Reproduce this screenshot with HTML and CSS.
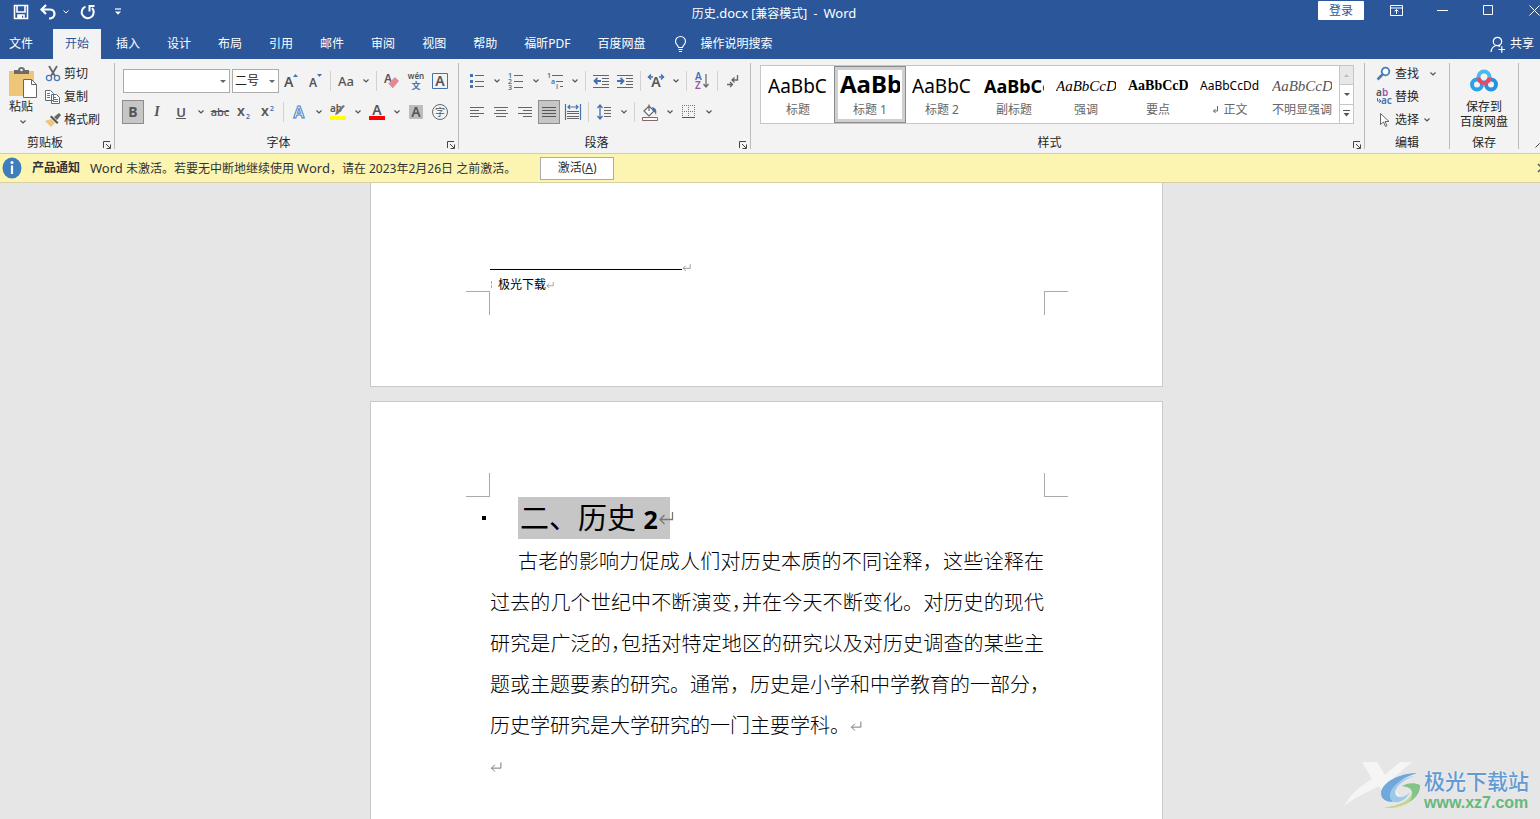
FILE: index.html
```html
<!DOCTYPE html>
<html lang="zh-CN">
<head>
<meta charset="utf-8">
<title>历史.docx - Word</title>
<link rel="stylesheet" href="styles.css">
</head>
<body>
<svg class="defs" aria-hidden="true">
  <symbol id="chev" viewBox="0 0 6 4"><path d="M.5.5 3 3 5.500.5" fill="none" stroke="#555" stroke-width="1.200"/></symbol>
  <symbol id="launch" viewBox="0 0 8 8"><path d="M.5 7V.5H7M3 3l4 4M7.500 3.500v4h-4" fill="none" stroke="#444"/></symbol>
  <symbol id="ret" viewBox="0 0 16 14"><path d="M14.500 1v7.500H2M6.500 4 2 8.500 6.500 13" fill="none" stroke="#777" stroke-width="1.300"/></symbol>
</svg>

<header class="titlebar">
  <div class="quick">
    <button aria-label="保存"><svg width="16" height="16" viewBox="0 0 16 16"><path d="M1.500 1.500h13v13h-13zM4 1.500V8h8V1.500M5 14.500V11h6v3.500" fill="none" stroke="#fff" stroke-width="1.600"/><path d="M5 11h4v4H5z" fill="#fff"/></svg></button>
    <button aria-label="撤消" class="undo"><svg width="16" height="16" viewBox="0 0 16 16"><path d="M6 1 1.500 5.500 6 10M2 5.500h7.500c3 0 5 1.800 5 4.500s-2.500 4.500-5.500 4.500" fill="none" stroke="#fff" stroke-width="2.200"/></svg><svg width="6" height="4" viewBox="0 0 6 4"><path d="M.5.5 3 3 5.500.5" fill="none" stroke="#fff"/></svg></button>
    <button aria-label="重复"><svg width="16" height="16" viewBox="0 0 16 16"><path d="M5.500 2.600A6 6 0 1 0 12 4M9.500 7.500V2h5" fill="none" stroke="#fff" stroke-width="2"/></svg></button>
    <button aria-label="自定义快速访问工具栏" class="custom"><svg width="6" height="8" viewBox="0 0 6 8"><path d="M0 1h6" stroke="#fff" stroke-width="1.200"/><path d="M0 3.500h6L3 6.800z" fill="#fff"/></svg></button>
  </div>
  <h1 class="doc-title">历史<span class="lat">.docx</span> [兼容模式]&nbsp; -&nbsp; <span class="lat">Word</span></h1>
  <div class="window-tools">
    <button class="login">登录</button>
    <button aria-label="功能区显示选项" class="wbtn"><svg width="13" height="11" viewBox="0 0 13 11"><path d="M.5.5h12v10H.5zM.5 3h12M6.500 9V4.500M4.500 6.500l2-2 2 2" fill="none" stroke="#fff"/></svg></button>
    <button aria-label="最小化" class="wbtn"><svg width="11" height="11" viewBox="0 0 11 11"><path d="M0 5.500h11" stroke="#fff"/></svg></button>
    <button aria-label="最大化" class="wbtn"><svg width="11" height="11" viewBox="0 0 11 11"><path d="M.5.5h9v9h-9z" fill="none" stroke="#fff"/></svg></button>
    <button aria-label="关闭" class="wbtn"><svg width="11" height="11" viewBox="0 0 11 11"><path d="m.5.5 10 10m0-10-10 10" stroke="#fff"/></svg></button>
  </div>
</header>

<nav class="tabs">
  <button class="file">文件</button><button class="active">开始</button><button>插入</button><button>设计</button><button>布局</button><button>引用</button><button>邮件</button><button>审阅</button><button>视图</button><button>帮助</button><button>福昕PDF</button><button>百度网盘</button>
  <button class="tell"><svg width="13" height="17" viewBox="0 0 13 17"><path d="M4.500 11.500c0-2-3-3-3-6a5 5 0 0 1 10 0c0 3-3 4-3 6zM4.500 13.500h4M5 15.500h3" fill="none" stroke="#fff" stroke-width="1.100"/></svg>操作说明搜索</button>
  <button class="share"><svg width="16" height="17" viewBox="0 0 16 17"><circle cx="7.500" cy="5.500" r="4.200" fill="none" stroke="#fff" stroke-width="1.200"/><path d="M1 16c.3-3.500 2-5.500 4.500-6.300M8 9.700c1 .1 1.500.5 2 1M8.500 13.500H15M11.800 10.200v6.500" fill="none" stroke="#fff" stroke-width="1.200"/></svg>共享</button>
</nav>

<main class="ribbon">
  <section class="group clipboard">
    <div class="body">
      <button class="paste">
        <svg width="29" height="31" viewBox="0 0 29 31"><path d="M0 4h25v25H0z" fill="#edc67a"/><path d="M5 7V3h4c0-4 7-4 7 0h4v4z" fill="#6b6b6b"/><circle cx="12.500" cy="3" r="1.300" fill="#f3f3f3"/><path d="M14.500 12.500h8l5 5v13h-13z" fill="#fff" stroke="#666"/><path d="M22.500 12.500v5h5" fill="none" stroke="#666"/></svg>
        <span>粘贴</span><svg width="6" height="4"><use href="#chev"/></svg>
      </button>
      <div class="stack">
        <button><svg width="16" height="16" viewBox="0 0 16 16"><path d="M4 0 10 10M12 0 6 10" stroke="#666" stroke-width="1.800"/><circle cx="4" cy="12" r="2.600" fill="none" stroke="#4a7ab5" stroke-width="1.300"/><circle cx="12" cy="12" r="2.600" fill="none" stroke="#4a7ab5" stroke-width="1.300"/></svg>剪切</button>
        <button><svg width="16" height="16" viewBox="0 0 16 16"><path d="M.5 1.500h5l3 3v7h-8zM6.500 5.500h5l3 3v6h-8z" fill="#fff" stroke="#5a6b80"/><path d="M2 4.500h3M2 6.500h3M2 8.500h3M8 8.500h3M8 10.500h5M8 12.500h5" stroke="#4a7ab5"/></svg>复制</button>
        <button><svg width="16" height="16" viewBox="0 0 16 16"><path d="m0 9 6-2 4 4-4 4z" fill="#edc67a"/><path d="m5 5 7 7 1.500-1.500-7-7z" fill="#555"/><path d="m9 5 5-4 2 2-4 5z" fill="#666"/></svg>格式刷</button>
      </div>
    </div>
    <footer>剪贴板<button class="launcher" aria-label="剪贴板设置"><svg width="8" height="8"><use href="#launch"/></svg></button></footer>
  </section>

  <section class="group font">
    <div class="body rows">
      <div class="row">
        <label class="combo name"><select aria-label="字体"><option></option></select></label>
        <label class="combo size"><select aria-label="字号"><option>二号</option></select></label>
        <button class="t" aria-label="增大字号"><svg width="18" height="18" viewBox="0 0 18 18"><text x="2" y="15" class="g14">A</text><path d="M11 5h5l-2.500-3z" fill="#4472b0"/></svg></button>
        <button class="t" aria-label="减小字号"><svg width="18" height="18" viewBox="0 0 18 18"><text x="3" y="15" class="g12">A</text><path d="M11 2h5l-2.500 3z" fill="#4472b0"/></svg></button>
        <i class="sep"></i>
        <button class="t aa">Aa</button><button class="c" aria-label="更改大小写"><svg width="6" height="4"><use href="#chev"/></svg></button>
        <i class="sep"></i>
        <button class="t" aria-label="清除格式"><svg width="18" height="18" viewBox="0 0 18 18"><text x="1" y="11" class="g12">A</text><path d="m5 12 7-7 4 4-6 7H8z" fill="#e58a95"/><path d="m5 12 4 4" stroke="#fff"/></svg></button>
        <button class="t" aria-label="拼音指南"><svg width="18" height="18" viewBox="0 0 18 18"><text x="9" y="7" text-anchor="middle" class="g8">wén</text><text x="9" y="17" text-anchor="middle" class="b9">文</text></svg></button>
        <button class="t" aria-label="字符边框"><svg width="16" height="16" viewBox="0 0 16 16"><path d="M.5.5h15v15H.5z" fill="none" stroke="#4472b0"/><text x="8" y="13" text-anchor="middle" class="g14">A</text></svg></button>
      </div>
      <div class="row">
        <button class="t on"><b>B</b></button><button class="t ital">I</button><button class="t under">U</button><button class="c" aria-label="下划线样式"><svg width="6" height="4"><use href="#chev"/></svg></button>
        <button class="t strike">abc</button>
        <button class="t" aria-label="下标"><svg width="16" height="16" viewBox="0 0 16 16"><text x="1" y="12" class="g14">x</text><text x="10" y="15" class="b7">2</text></svg></button>
        <button class="t" aria-label="上标"><svg width="16" height="16" viewBox="0 0 16 16"><text x="1" y="12" class="g14">x</text><text x="10" y="7" class="b7">2</text></svg></button>
        <i class="sep"></i>
        <button class="t" aria-label="文本效果"><svg width="16" height="16" viewBox="0 0 16 16"><text x="8" y="14" text-anchor="middle" class="fx">A</text></svg></button><button class="c" aria-label="效果选项"><svg width="6" height="4"><use href="#chev"/></svg></button>
        <button class="t" aria-label="突出显示"><svg width="18" height="18" viewBox="0 0 18 18"><text x="1" y="9" class="g10">ab</text><path d="m16 3-7 8-3 1 1-3 7-7z" fill="#777"/><path d="M1 13h16v4H1z" fill="#ff0"/></svg></button><button class="c" aria-label="突出显示颜色"><svg width="6" height="4"><use href="#chev"/></svg></button>
        <button class="t" aria-label="字体颜色"><svg width="18" height="18" viewBox="0 0 18 18"><text x="9" y="12" text-anchor="middle" class="g14">A</text><path d="M1 13h16v4H1z" fill="#f00"/></svg></button><button class="c" aria-label="更多字体颜色"><svg width="6" height="4"><use href="#chev"/></svg></button>
        <button class="t" aria-label="字符底纹"><svg width="14" height="14" viewBox="0 0 14 14"><path d="M0 0h14v14H0z" fill="#bdbdbd"/><text x="7" y="12" text-anchor="middle" class="g14">A</text></svg></button>
        <button class="t" aria-label="带圈字符"><svg width="16" height="16" viewBox="0 0 16 16"><circle cx="8" cy="8" r="7.500" fill="none" stroke="#666"/><text x="8" y="12" text-anchor="middle" class="g9">字</text></svg></button>
      </div>
    </div>
    <footer>字体<button class="launcher" aria-label="字体设置"><svg width="8" height="8"><use href="#launch"/></svg></button></footer>
  </section>

  <section class="group para">
    <div class="body rows">
      <div class="row">
        <button class="t" aria-label="项目符号"><svg width="16" height="16" viewBox="0 0 16 16"><path d="M1 1h3v3H1zM1 7h3v3H1zM1 12h3v3H1z" fill="#4472b0"/><path d="M6 2.500h9M6 8.500h9M6 13.500h9" stroke="#666"/></svg></button><button class="c" aria-label="项目符号库"><svg width="6" height="4"><use href="#chev"/></svg></button>
        <button class="t" aria-label="编号"><svg width="16" height="18" viewBox="0 0 16 18"><text x="0" y="6" class="b7">1</text><text x="0" y="12" class="b7">2</text><text x="0" y="18" class="b7">3</text><path d="M6 3.500h9M6 9.500h9M6 15.500h9" stroke="#666"/></svg></button><button class="c" aria-label="编号库"><svg width="6" height="4"><use href="#chev"/></svg></button>
        <button class="t" aria-label="多级列表"><svg width="18" height="18" viewBox="0 0 18 18"><text x="1" y="6" class="b7">1</text><text x="5" y="12" class="b7">a</text><text x="10" y="17" class="b7">i</text><path d="M6 3.500h11M10 9.500h7M14 14.500h3" stroke="#666"/></svg></button><button class="c" aria-label="列表库"><svg width="6" height="4"><use href="#chev"/></svg></button>
        <i class="sep"></i>
        <button class="t" aria-label="减少缩进量"><svg width="16" height="14" viewBox="0 0 16 14"><path d="M0 1.500h16M9 4.500h7M9 7.500h7M9 10.500h7M0 13.500h16" stroke="#666"/><path d="M8 7H2M4.500 4 1.500 7l3 3" fill="none" stroke="#4472b0" stroke-width="1.800"/></svg></button>
        <button class="t" aria-label="增加缩进量"><svg width="16" height="14" viewBox="0 0 16 14"><path d="M0 1.500h16M9 4.500h7M9 7.500h7M9 10.500h7M0 13.500h16" stroke="#666"/><path d="M0 7h6M3.500 4l3 3-3 3" fill="none" stroke="#4472b0" stroke-width="1.800"/></svg></button>
        <i class="sep"></i>
        <button class="t" aria-label="中文版式"><svg width="18" height="16" viewBox="0 0 18 16"><text x="9" y="14" text-anchor="middle" class="g14">A</text><path d="M6 4H2M4 1.500 1.500 4 4 6.500M12 4h4M14 1.500 16.500 4 14 6.500" fill="none" stroke="#4472b0" stroke-width="1.500"/></svg></button><button class="c" aria-label="版式选项"><svg width="6" height="4"><use href="#chev"/></svg></button>
        <i class="sep"></i>
        <button class="t" aria-label="排序"><svg width="16" height="18" viewBox="0 0 16 18"><text x="1" y="8" class="b10">A</text><text x="1" y="17" class="z10">Z</text><path d="M12 2v13M9.500 12l2.500 3 2.500-3" fill="none" stroke="#666" stroke-width="1.200"/></svg></button>
        <i class="sep"></i>
        <button class="t" aria-label="显示编辑标记"><svg width="14" height="16" viewBox="0 0 14 16"><path d="M11.500 2v5H6M8.500 4.500 6 7l2.500 2.500M1 11.500h5M4 9l2.500 2.500L4 14" fill="none" stroke="#666" stroke-width="1.300"/></svg></button>
      </div>
      <div class="row">
        <button class="t" aria-label="左对齐"><svg width="14" height="14" viewBox="0 0 14 14"><path d="M0 2.500h14M0 5.500h9M0 8.500h14M0 11.500h9" stroke="#666"/></svg></button>
        <button class="t" aria-label="居中"><svg width="14" height="14" viewBox="0 0 14 14"><path d="M0 2.500h14M2 5.500h10M0 8.500h14M2 11.500h10" stroke="#666"/></svg></button>
        <button class="t" aria-label="右对齐"><svg width="14" height="14" viewBox="0 0 14 14"><path d="M0 2.500h14M5 5.500h9M0 8.500h14M5 11.500h9" stroke="#666"/></svg></button>
        <button class="t on" aria-label="两端对齐"><svg width="14" height="14" viewBox="0 0 14 14"><path d="M0 2.500h14M0 5.500h14M0 8.500h14M0 11.500h14" stroke="#555"/></svg></button>
        <button class="t" aria-label="分散对齐"><svg width="16" height="16" viewBox="0 0 16 16"><path d="M.5 0v16M15.500 0v16M3 3h10M5 1 3 3l2 2M11 1l2 2-2 2" fill="none" stroke="#4472b0" stroke-width="1.200"/><path d="M2 7.500h12M2 9.500h12M2 12.500h12M2 14.500h12" stroke="#666"/></svg></button>
        <i class="sep"></i>
        <button class="t" aria-label="行距"><svg width="16" height="16" viewBox="0 0 16 16"><path d="M4 1v14M1.500 4 4 1l2.500 3M1.500 12 4 15l2.500-3" fill="none" stroke="#4472b0" stroke-width="1.300"/><path d="M8 3.500h7M8 6.500h7M8 9.500h7M8 12.500h7" stroke="#666"/></svg></button><button class="c" aria-label="行距选项"><svg width="6" height="4"><use href="#chev"/></svg></button>
        <i class="sep"></i>
        <button class="t" aria-label="底纹"><svg width="18" height="18" viewBox="0 0 18 18"><path d="m3 8 5-5 5 5-5 5zM8 8V1.500" fill="#fff" stroke="#666" stroke-width="1.200"/><path d="M11 4c4 1 5 3 4 8-1-2-1-3-3-4z" fill="#4472b0"/><path d="M1.500 14.500h15v3h-15z" fill="#fff" stroke="#866"/></svg></button><button class="c" aria-label="底纹颜色"><svg width="6" height="4"><use href="#chev"/></svg></button>
        <button class="t" aria-label="边框"><svg width="14" height="14" viewBox="0 0 14 14"><path d="M.5 0v13M6.500 0v13M12.500 0v13M0 .5h13M0 6.500h13" fill="none" stroke="#777" stroke-dasharray="1 1"/><path d="M0 12.500h13" stroke="#555"/></svg></button><button class="c" aria-label="边框选项"><svg width="6" height="4"><use href="#chev"/></svg></button>
      </div>
    </div>
    <footer>段落<button class="launcher" aria-label="段落设置"><svg width="8" height="8"><use href="#launch"/></svg></button></footer>
  </section>

  <section class="group styles">
    <div class="body">
      <div class="gallery">
        <button class="style"><span class="pv light">AaBbC</span><span class="nm">标题</span></button>
        <button class="style sel"><span class="pv h1">AaBb</span><span class="nm">标题 1</span></button>
        <button class="style"><span class="pv light">AaBbC</span><span class="nm">标题 2</span></button>
        <button class="style"><span class="pv sub">AaBbCc</span><span class="nm">副标题</span></button>
        <button class="style"><span class="pv em">AaBbCcDd</span><span class="nm">强调</span></button>
        <button class="style"><span class="pv strong">AaBbCcD</span><span class="nm">要点</span></button>
        <button class="style"><span class="pv normal">AaBbCcDd</span><span class="nm"><svg width="7" height="8" viewBox="0 0 7 8"><path d="M5.500 0v5H1.500M3.500 3l-2 2 2 2" fill="none" stroke="#666"/></svg> 正文</span></button>
        <button class="style"><span class="pv em faint">AaBbCcDd</span><span class="nm">不明显强调</span></button>
        <div class="scroller">
          <button class="off" aria-label="上一行"><svg width="5" height="3" viewBox="0 0 5 3"><path d="M0 3h5L2.500 0z" fill="#bbb"/></svg></button>
          <button aria-label="下一行"><svg width="6" height="3" viewBox="0 0 6 3"><path d="M0 0h6L3 3z" fill="#555"/></svg></button>
          <button aria-label="更多样式"><svg width="7" height="7" viewBox="0 0 7 7"><path d="M0 .5h7" stroke="#555"/><path d="M.5 3h6l-3 3.500z" fill="#555"/></svg></button>
        </div>
      </div>
    </div>
    <footer>样式<button class="launcher" aria-label="样式设置"><svg width="8" height="8"><use href="#launch"/></svg></button></footer>
  </section>

  <section class="group edit">
    <div class="body stack">
      <button><svg width="16" height="16" viewBox="0 0 16 16"><circle cx="9.500" cy="5.500" r="3.800" fill="#fff" stroke="#4a7ab5" stroke-width="1.800"/><path d="m6.500 8.500-5 5" stroke="#4a7ab5" stroke-width="2.500"/></svg>查找<svg class="far" width="6" height="4"><use href="#chev"/></svg></button>
      <button><svg width="16" height="18" viewBox="0 0 16 18"><text x="0" y="8" class="g10">a</text><text x="6" y="8" class="z10">b</text><text x="5" y="16" class="b10">ac</text><path d="M1.500 10v3h3M3 11l2 2-2 2" fill="none" stroke="#4472b0"/></svg>替换</button>
      <button><svg width="16" height="16" viewBox="0 0 16 16"><path d="M4.500 1.500v11l3-2.500 2 4.500 1.500-.8-2-4.200h4z" fill="#fff" stroke="#666"/></svg>选择<svg class="near" width="6" height="4"><use href="#chev"/></svg></button>
    </div>
    <footer>编辑</footer>
  </section>

  <section class="group save">
    <div class="body">
      <button class="cloud"><svg width="28" height="24" viewBox="0 0 28 24"><circle cx="7" cy="15.500" r="5" fill="none" stroke="#2ba3e8" stroke-width="4"/><circle cx="21" cy="15.500" r="5" fill="none" stroke="#2493e3" stroke-width="4"/><circle cx="14" cy="8" r="5.500" fill="none" stroke="#49b9f0" stroke-width="4"/><path d="M8.500 8.500a5.500 5.500 0 0 0 11 0" fill="none" stroke="#ef4760" stroke-width="4"/></svg><span>保存到<br>百度网盘</span></button>
    </div>
    <footer>保存</footer>
  </section>
  <div class="ribbon-end"><button class="collapse" aria-label="折叠功能区"><svg width="9" height="6" viewBox="0 0 9 6"><path d="m.5 5.500 4-4 4 4" fill="none" stroke="#444"/></svg></button></div>
</main>

<aside class="notice">
  <svg width="20" height="22" viewBox="0 0 20 22"><ellipse cx="10" cy="11" rx="9.500" ry="10.500" fill="#3f7dbd"/><circle cx="10" cy="5.500" r="1.500" fill="#fff"/><path d="M10 8.500V17" stroke="#fff" stroke-width="2.200"/></svg>
  <strong>产品通知</strong>
  <span><span class="lat">Word</span> 未激活。若要无中断地继续使用 <span class="lat">Word</span>，请在 2023年2月26日 之前激活。</span>
  <button class="activate">激活(<u>A</u>)</button>
  <button class="dismiss" aria-label="关闭通知"><svg width="8" height="8" viewBox="0 0 8 8"><path d="m0 0 8 8m0-8L0 8" stroke="#555" stroke-width="1.500"/></svg></button>
</aside>

<div class="canvas">
  <article class="page first">
    <div class="note-rule"><hr><svg width="9" height="9"><use href="#ret"/></svg></div>
    <p class="footnote"><svg width="3" height="8" viewBox="0 0 3 8"><path d="M1.500 0v3M1.500 4v3" stroke="#aaa"/></svg>极光下载<svg width="8" height="8"><use href="#ret"/></svg></p>
    <div class="corners down"><i></i><i></i></div>
  </article>
  <article class="page second">
    <div class="corners up"><i></i><i></i></div>
    <h2><span class="dot"></span><mark>二、历史 <b>2</b></mark><svg width="16" height="16"><use href="#ret"/></svg></h2>
    <div class="text">
      <p class="indent">古老的影响力促成人们对历史本质的不同诠释，这些诠释在</p>
      <p>过去的几个世纪中不断演变<span class="half">，</span>并在今天不断变化。对历史的现代</p>
      <p>研究是广泛的<span class="half">，</span>包括对特定地区的研究以及对历史调查的某些主</p>
      <p class="start">题或主题要素的研究。通常，历史是小学和中学教育的一部分，</p>
      <p class="start">历史学研究是大学研究的一门主要学科。<svg width="12" height="12"><use href="#ret"/></svg></p>
      <p class="start"><svg width="12" height="12"><use href="#ret"/></svg></p>
    </div>
  </article>
  <div class="watermark">
    <svg class="ghost" width="80" height="50" viewBox="0 0 80 50"><path d="M20 3h15l8 13L58 3h12L48 22l10 16H44l-7-11C24 34 12 39 2 47c6-11 16-20 28-27z" fill="#fff" opacity=".6"/></svg>
    <svg class="logo" width="42" height="38" viewBox="0 0 42 38"><path d="M37 1C20 1 2 10 1 21c0 6 5 9 12 9C8 22 14 8 37 1z" fill="#5b9bd8" opacity=".85"/><path d="M34 4C20 9 13 17 16 23c3 4 10 2 14-3-4 9-14 13-19 8C7 20 15 8 34 4z" fill="#9cc8ea"/><path d="M22 14c5-3 12-4 18-1 1 12-13 23-36 23 15-2 26-7 28-15 0-5-5-6-10-7z" fill="#72bd77" opacity=".85"/><path d="M6 35c13 0 22-6 26-13 1 9-11 16-26 13z" fill="#d6dc8b" opacity=".8"/></svg>
    <div class="wm-text"><span>极光下载站</span><em>www.xz7.com</em></div>
  </div>
</div>
</body>
</html>
```
FILE: styles.css
```css
* { box-sizing: border-box; }
body { margin: 0; height: 100vh; overflow: hidden; display: flex; flex-direction: column; font: 12px/16px "Noto Sans", "Noto Sans CJK SC", sans-serif; color: #262626; background: #e6e6e6; }
button { font: inherit; color: inherit; background: none; border: 0; padding: 0; margin: 0; display: flex; align-items: center; justify-content: center; white-space: nowrap; flex: none; }
svg { flex: none; display: block; overflow: visible; }
p, h1, h2 { margin: 0; }
.defs { position: absolute; width: 0; height: 0; }
.lat { font-size: 13px; }

.titlebar { height: 29px; background: #2b579a; color: #fff; display: grid; grid-template-columns: 1fr auto 1fr; align-items: start; flex: none; }
.quick { display: flex; align-items: center; gap: 11px; padding: 4px 0 0 13px; }
.quick .undo { gap: 7px; }
.quick .custom { margin-left: 8px; }
.doc-title { font-size: 12px; font-weight: 400; line-height: 26px; margin-left: 8px; }
.window-tools { display: flex; align-items: flex-start; justify-content: flex-end; }
.login { background: #fff; color: #2b579a; width: 46px; height: 19px; margin: 1px 9px 0 0; border-radius: 1px; }
.wbtn { width: 46px; height: 20px; }
.window-tools .wbtn:last-child { margin-right: -17px; }
.titlebar, .tabs, .ribbon, .notice { overflow: hidden; }

.tabs { height: 30px; background: #2b579a; color: #fff; display: flex; gap: 3px; flex: none; }
.tabs button { padding: 0 12px; }
.tabs .file { padding: 0 17px 0 9px; }
.tabs .active { background: #f3f3f3; color: #2b579a; }
.tabs .tell { gap: 13px; padding-left: 14px; }
.tabs .share { margin-left: auto; padding: 0 6px; gap: 4px; }

.ribbon { height: 94px; background: #f3f3f3; display: flex; flex: none; padding-top: 4px; }
.group { display: flex; flex-direction: column; position: relative; flex: none; border-right: 1px solid #bbb; height: 86px; }
.group .body { height: 70px; }
.group footer { height: 16px; line-height: 16px; padding-top: 2px; text-align: center; position: relative; padding-right: 24px; }
.launcher { position: absolute; right: 3px; top: 8px; }
.clipboard { width: 115px; }
.clipboard .body { display: flex; gap: 7px; padding-left: 9px; }
.font { width: 344px; }
.para { width: 292px; }
.font footer, .para footer, .styles footer { padding-right: 16px; }
.styles { flex: 1 1 auto; min-width: 0; }
.edit { width: 85px; }
.save { width: 69px; }
.edit footer, .save footer { padding-right: 0; }
.ribbon-end { width: 21px; flex: none; overflow: hidden; }
.collapse { margin: 78px -4px 0 auto; height: 8px; }

.paste { flex-direction: column; justify-content: flex-start; align-items: flex-start; padding-top: 4px; }
.paste span { line-height: 18px; }
.paste > svg:last-child { margin: 4px 0 0 11px; }
.stack { display: flex; flex-direction: column; align-items: flex-start; }
.stack button { height: 23px; gap: 3px; padding-bottom: 2px; }
.edit .stack { padding-left: 11px; }
.edit .far { margin-left: 8px; }
.edit .near { margin-left: 2px; }

.rows { display: flex; flex-direction: column; gap: 7px; padding: 6px 0 0 6px; }
.row { display: flex; align-items: center; height: 24px; }
.combo { position: relative; height: 24px; margin-right: 2px; }
.combo select { appearance: none; width: 100%; height: 100%; border: 1px solid #ababab; border-radius: 0; background: #fff; font: inherit; color: #262626; padding: 0 0 0 2px; display: block; }
.combo::after { content: ""; position: absolute; right: 4px; top: 11px; border: 3px solid transparent; border-top-color: #666; }
.combo.name { width: 107px; margin-left: 2px; }
.combo.size { width: 47px; margin-right: 0; }
.t { width: 24px; height: 24px; color: #555; }
.c { width: 15px; height: 24px; }
.on { background: #c6c6c6; box-shadow: inset 0 0 0 1px #8c8c8c; width: 22px; margin: 0 1px; font-size: 14px; }
.ital { font: italic bold 14px "Liberation Serif", serif; }
.under { text-decoration: underline; font-weight: 600; font-size: 13px; }
.strike { text-decoration: line-through; font-size: 11px; font-weight: 500; }
.aa { font-size: 13px; font-weight: 500; }
.sep { width: 7px; height: 20px; flex: none; background: linear-gradient(#d2d2d2, #d2d2d2) 3px 0 / 1px 100% no-repeat; }
text { font-family: "Noto Sans", "Noto Sans CJK SC", sans-serif; fill: #555; }
.g14 { font-size: 14px; font-weight: 600; }
.g12 { font-size: 12px; font-weight: 600; }
.g10 { font-size: 10px; font-weight: 600; }
.g9 { font-size: 10px; }
.g8 { font-size: 8px; font-weight: 600; }
.b7, .b9, .b10 { fill: #4472b0; font-size: 7px; font-weight: 600; }
.b9 { font-size: 9px; }
.b10, .z10 { font-size: 10px; }
.z10 { fill: #9559a8; font-weight: 600; }
.fx { font-size: 16px; font-weight: 600; fill: #fff; stroke: #4a7fc0; }

.styles .body { padding: 2px 10px 0 9px; }
.gallery { display: flex; border: 1px solid #c6c6c6; background: #fff; height: 59px; padding-left: 1px; }
.style { width: 72px; height: 57px; flex-direction: column; justify-content: flex-start; }
.sel { box-shadow: inset 0 0 0 1px #8c8c8c, inset 0 0 0 4px #cfcfcf; }
.pv { width: 60px; height: 30px; margin-top: 4px; line-height: 32px; overflow: hidden; text-align: left; color: #000; }
.nm { color: #666; display: flex; align-items: center; line-height: 20px; gap: 4px; }
.light { font-size: 19px; }
.h1 { font-size: 24px; font-weight: 700; line-height: 28px; }
.sub { font-size: 18px; font-weight: 700; }
.em { font: italic 15px/32px "Liberation Serif", serif; }
.strong { font: bold 14px/32px "Liberation Serif", serif; }
.normal { font-size: 12px; line-height: 32px; }
.faint { color: #555; }
.scroller { margin-left: auto; width: 14px; display: flex; flex-direction: column; border-left: 1px solid #c6c6c6; }
.scroller button { flex: 1; }
.scroller button + button { border-top: 1px solid #c6c6c6; }
.scroller .off { background: #e8e8e8; }
.cloud { flex-direction: column; width: 100%; padding-top: 6px; line-height: 15px; gap: 6px; }

.notice { height: 30px; flex: none; display: flex; align-items: center; background: #fcf5b2; border-top: 1px solid #d6cf9a; border-bottom: 1px solid #d6d1a4; padding-left: 2px; color: #333; }
.notice strong { margin: 0 10px; }
.activate { width: 74px; height: 23px; border: 1px solid #ababab; background: #fff; margin-left: 24px; }
.dismiss { margin: 0 -6px 0 auto; }

.canvas { flex: 1; min-height: 0; overflow: hidden; position: relative; padding-right: 7px; display: flex; flex-direction: column; align-items: center; gap: 14px; }
.page { background: #fff; border: 1px solid #c9c9c9; width: 793px; color: #000; flex: none; }
.first { border-top: 0; padding: 80px 0 71px; }
.second { padding: 71px 0 200px; }
.note-rule { display: flex; padding-left: 119px; height: 16px; }
.note-rule hr { width: 192px; height: 1px; border: 0; background: #000; margin: 6px 0 0; }
.footnote { display: flex; align-items: center; padding-left: 119px; line-height: 12px; height: 12px; }
.footnote svg:first-child { margin-right: 5px; }
.corners { display: flex; justify-content: space-between; padding: 0 94px 0 95px; }
.corners i { width: 24px; height: 24px; border: 0 solid #aaa; }
.down i { border-top-width: 1px; }
.up i { border-bottom-width: 1px; }
.corners i:first-child { border-right-width: 1px; }
.corners i:last-child { border-left-width: 1px; }
h2 { display: flex; align-items: center; font-size: 29px; line-height: 42px; font-weight: 400; padding-left: 111px; }
.dot { width: 4px; height: 4px; background: #000; margin-right: 32px; }
mark { background: #c6c6c6; color: #000; padding: 0 12px 0 2px; height: 42px; }
mark b { font-size: 25px; font-family: "Open Sans", sans-serif; }
h2 svg { margin-left: -12px; }
.text { padding: 1px 118px 0 119px; font-size: 20px; line-height: 41px; font-weight: 300; font-family: "Noto Sans CJK SC", sans-serif; }
.text p { height: 41px; white-space: nowrap; text-align: justify; text-align-last: justify; }
.text .indent { padding-left: 28px; }
.text .start { text-align-last: left; }
.text svg { display: inline-block; vertical-align: 1px; }
.half { font-feature-settings: "halt"; }

.watermark { position: absolute; right: 11px; bottom: 6px; display: flex; align-items: center; gap: 2px; }
.ghost { position: absolute; right: 107px; bottom: 4px; }
.logo { position: relative; }
.wm-text { display: flex; flex-direction: column; font-weight: 500; opacity: .85; }
.wm-text span { font-size: 21px; line-height: 24px; color: #4b8fd0; text-shadow: 0 0 2px #fff; }
.wm-text em { font: 16px/20px "Liberation Sans", sans-serif; font-weight: 700; color: #52b06a; }
```
